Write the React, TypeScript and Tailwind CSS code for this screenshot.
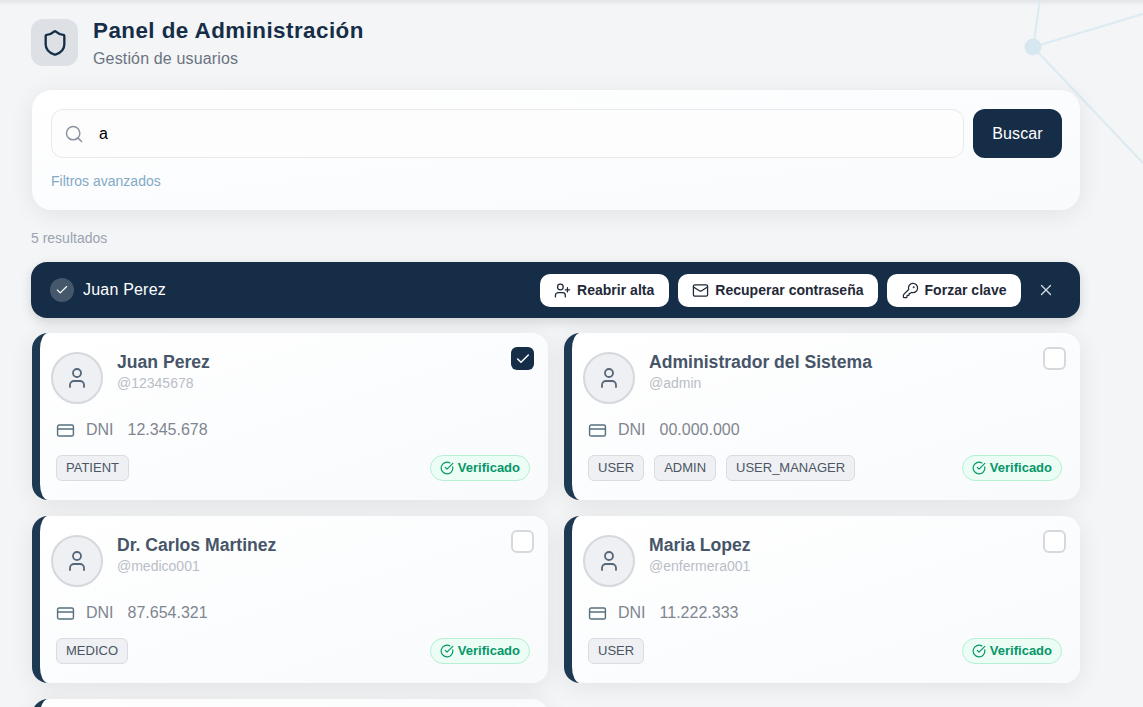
import { Check, CircleCheckBig, CreditCard, KeyRound, Mail, Search, Shield, User, UserPlus, X } from "lucide-react";

const USERS = [
  { name: "Juan Perez", handle: "@12345678", dni: "12.345.678", roles: ["PATIENT"], selected: true },
  { name: "Administrador del Sistema", handle: "@admin", dni: "00.000.000", roles: ["USER", "ADMIN", "USER_MANAGER"] },
  { name: "Dr. Carlos Martinez", handle: "@medico001", dni: "87.654.321", roles: ["MEDICO"] },
  { name: "Maria Lopez", handle: "@enfermera001", dni: "11.222.333", roles: ["USER"] },
];

const ACTIONS = [
  { icon: UserPlus, label: "Reabrir alta" },
  { icon: Mail, label: "Recuperar contraseña" },
  { icon: KeyRound, label: "Forzar clave" },
];

function UserCard({ user }: { user: (typeof USERS)[number] }) {
  return (
    <div className="relative h-[167px] rounded-2xl border-l-8 border-[#1e3a52] bg-gradient-to-br from-white to-[#f8fafc] pl-[11px] pr-[18px] pt-[19px] shadow-[0_4px_24px_rgba(0,0,0,0.08)]">
      <div
        className={
          user.selected
            ? "absolute right-[14px] top-[14px] flex h-[23px] w-[23px] items-center justify-center rounded-md bg-[#162d47] text-white"
            : "absolute right-[14px] top-[14px] h-[23px] w-[23px] rounded-md border-2 border-[#d5d8dc] bg-white"
        }
      >
        {user.selected && <Check className="h-4 w-4" strokeWidth={2.2} />}
      </div>
      <div className="flex items-start gap-[14px]">
        <div className="flex h-[52px] w-[52px] items-center justify-center rounded-full border-2 border-[#d5d8dc] bg-[#eef0f3] text-[#56677a]">
          <User className="h-[24px] w-[24px]" strokeWidth={1.8} />
        </div>
        <div>
          <div className="text-[17.6px] font-bold leading-[20px] text-[#475569]">{user.name}</div>
          <div className="mt-[1px] text-[14px] leading-[20px] text-[#b9bdc6]">{user.handle}</div>
        </div>
      </div>
      <div className="ml-[5px] mt-[14px] flex h-[24px] items-center text-[16px] text-[#7f8690]">
        <CreditCard className="h-[19px] w-[19px] text-[#56707f]" strokeWidth={1.8} />
        <span className="ml-[11px]">DNI</span>
        <span className="ml-[14px]">{user.dni}</span>
      </div>
      <div className="ml-[5px] mt-[13px] flex items-center justify-between">
        <div className="flex gap-[10px]">
          {user.roles.map((role) => (
            <span
              key={role}
              className="flex h-[26px] items-center rounded-md border border-[#d9dce1] bg-[#eef0f3] px-[9px] text-[13px] text-[#4b5563]"
            >
              {role}
            </span>
          ))}
        </div>
        <span className="flex h-[26px] items-center gap-[4px] rounded-full border border-[#b5f0d3] bg-[#ecfdf5] px-[9px] text-[13px] font-bold text-[#059669]">
          <CircleCheckBig className="h-[14px] w-[14px]" strokeWidth={2} />
          Verificado
        </span>
      </div>
    </div>
  );
}

export default function App() {
  return (
    <div className="relative h-[707px] overflow-hidden bg-[#f3f5f7] font-['Liberation_Sans',Arial,sans-serif]">
      <div className="absolute inset-x-0 top-0 h-[6px] bg-gradient-to-b from-[#e2e4e7] to-transparent" />
      <svg className="absolute inset-0 h-full w-full" viewBox="0 0 1143 707">
        <g stroke="#dcebf1" strokeWidth="2" fill="none">
          <line x1="1033" y1="47" x2="1040" y2="0" />
          <line x1="1033" y1="47" x2="1143" y2="14" />
          <line x1="1033" y1="47" x2="1143" y2="163" />
        </g>
        <circle cx="1033" cy="47" r="8.5" fill="#d6e7ef" />
      </svg>

      <div className="relative ml-[31px] w-[1049px] pt-[19px]">
        <div className="flex h-[47px] items-start gap-[15px]">
          <div className="flex h-[47px] w-[47px] items-center justify-center rounded-xl bg-[#dde1e6] text-[#162d47]">
            <Shield className="h-[28px] w-[28px]" strokeWidth={2} />
          </div>
          <div>
            <h1 className="text-[22.4px] font-bold leading-[24px] tracking-[0.45px] text-[#162d47]">Panel de Administración</h1>
            <p className="mt-[4px] text-[16px] leading-[24px] tracking-[0.15px] text-[#6b7280]">Gestión de usuarios</p>
          </div>
        </div>

        <div className="ml-[1px] mt-[24px] h-[120px] rounded-[20px] bg-gradient-to-br from-white to-[#f8fafc] pl-[19px] pr-[18px] pt-[19px] shadow-[0_4px_24px_rgba(0,0,0,0.08)]">
          <div className="flex gap-[9px]">
            <div className="flex h-[49px] flex-1 items-center rounded-xl border border-[#e7e9ec] bg-[#fdfdfe] pl-[12px]">
              <Search className="h-[20px] w-[20px] text-[#8b93a0]" strokeWidth={1.8} />
              <span className="ml-[15px] text-[16px] text-black">a</span>
            </div>
            <button className="h-[49px] w-[89px] rounded-xl bg-[#162d47] text-[16px] tracking-[0.15px] text-white">Buscar</button>
          </div>
          <div className="mt-[15px] text-[14px] leading-[16px] text-[#82aac6]">Filtros avanzados</div>
        </div>

        <div className="mt-[20px] text-[14px] leading-[16px] text-[#9ca3af]">5 resultados</div>

        <div className="mt-[16px] flex h-[56px] items-center rounded-2xl bg-[#162d47] pl-[19px] pr-[25px] shadow-[0_4px_12px_rgba(0,0,0,0.14)]">
          <div className="flex h-[24px] w-[24px] items-center justify-center rounded-full bg-white/20 text-white">
            <Check className="h-[14px] w-[14px]" strokeWidth={2} />
          </div>
          <span className="ml-[9px] text-[16px] tracking-[0.2px] text-white">Juan Perez</span>
          <div className="ml-auto flex items-center gap-[9px]">
            {ACTIONS.map((action) => {
              const Icon = action.icon;
              return (
                <button
                  key={action.label}
                  className="flex h-[33px] items-center gap-[6px] rounded-[10px] bg-white px-[14.5px] text-[14px] font-bold tracking-[0.02px] text-[#1f2937]"
                >
                  <Icon className="h-[17px] w-[17px]" strokeWidth={1.8} />
                  {action.label}
                </button>
              );
            })}
          </div>
          <X className="ml-[16px] h-[18px] w-[18px] text-[#d6dce3]" strokeWidth={1.8} />
        </div>

        <div className="ml-[1px] mt-[15px] grid grid-cols-2 gap-x-[16px] gap-y-[16px]">
          {USERS.map((user) => (
            <UserCard key={user.name} user={user} />
          ))}
          <div className="h-[167px] rounded-2xl border-l-8 border-[#1e3a52] bg-gradient-to-br from-white to-[#f8fafc] shadow-[0_4px_24px_rgba(0,0,0,0.08)]" />
        </div>
      </div>
    </div>
  );
}
